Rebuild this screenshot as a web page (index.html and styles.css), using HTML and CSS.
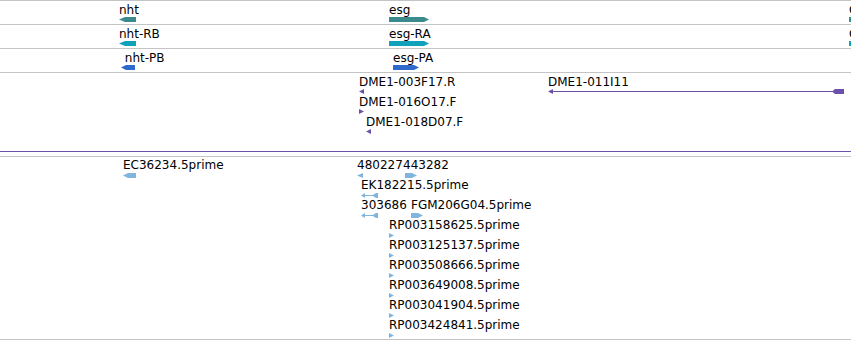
FILE: index.html
```html
<!DOCTYPE html>
<html lang="en">
<head>
  <meta charset="UTF-8" />
  <title>Feature tracks</title>
  <link rel="stylesheet" href="styles.css">
</head>
<body>
  <div class="browser">
    <!-- gene track -->
    <div class="track gene">
      <div class="feat" style="left:119px;top:2px"><span class="label">nht</span><svg width="17" height="5"><polygon points="0,2.5 6,0 17,0 17,5 6,5"/></svg></div>
      <div class="feat" style="left:389px;top:2px"><span class="label">esg</span><svg width="40" height="5"><polygon points="0,0 35,0 40,2.5 35,5 0,5"/></svg></div>
      <div class="feat" style="left:849px;top:2px"><span class="label">CG</span><svg width="10" height="5"><rect width="10" height="5"/></svg></div>
    </div>

    <!-- transcript track -->
    <div class="track mrna">
      <div class="feat" style="left:119px;top:2px"><span class="label">nht-RB</span><svg width="17" height="5"><polygon points="0,2.5 6,0 17,0 17,5 6,5"/></svg></div>
      <div class="feat" style="left:389px;top:2px"><span class="label">esg-RA</span><svg width="40" height="5"><polygon points="0,0 35,0 40,2.5 35,5 0,5"/></svg></div>
      <div class="feat" style="left:849px;top:2px"><span class="label">CG</span><svg width="10" height="5"><rect width="10" height="5"/></svg></div>
    </div>

    <!-- protein track -->
    <div class="track cds">
      <div class="feat" style="left:121px;top:2px"><span class="label">&nbsp;nht-PB</span><svg width="14" height="5"><polygon points="0,2.5 5,0 14,0 14,5 5,5"/></svg></div>
      <div class="feat" style="left:393px;top:2px"><span class="label">esg-PA</span><svg width="26" height="5"><polygon points="0,0 21,0 26,2.5 21,5 0,5"/></svg></div>
    </div>

    <!-- clone ends -->
    <div class="track clones">
      <div class="feat" style="left:359px;top:2px"><span class="label">DME1-003F17.R</span><svg width="5" height="5"><polygon points="0,2.5 5,0 5,5"/></svg></div>
      <div class="feat" style="left:359px;top:22px"><span class="label">DME1-016O17.F</span><svg width="5" height="5"><polygon points="0,0 5,2.5 0,5"/></svg></div>
      <div class="feat" style="left:366px;top:42px"><span class="label">DME1-018D07.F</span><svg width="5" height="5"><polygon points="0,2.5 5,0 5,5"/></svg></div>
      <div class="feat" style="left:548px;top:2px"><span class="label">DME1-011I11</span><svg width="296" height="5"><polygon points="0,2.5 5,0 5,5"/><rect x="4" y="2" width="282" height="1"/><polygon points="284,2.5 287,0 296,0 296,5 287,5"/></svg></div>
    </div>

    <!-- ESTs -->
    <div class="track ests">
      <div class="feat" style="left:123px;top:1px"><span class="label">EC36234.5prime</span><svg width="13" height="5"><polygon points="0,2.5 5,0 13,0 13,5 5,5"/></svg></div>
      <div class="feat" style="left:357px;top:1px"><span class="label">480227</span><svg width="7" height="5"><polygon points="0,2.5 6,0 6,5"/></svg></div>
      <div class="feat" style="left:403px;top:1px"><span class="label">443282</span><svg class="shift" width="12" height="5"><polygon points="0,0 7,0 12,2.5 7,5 0,5"/></svg></div>
      <div class="feat" style="left:361px;top:21px"><span class="label">EK182215.5prime</span><svg width="17" height="5"><polygon points="0,2.5 4,0 4,5"/><rect x="3" y="2" width="9" height="1"/><polygon points="11,2.5 15,0 17,0 17,5 15,5"/></svg></div>
      <div class="feat" style="left:361px;top:41px"><span class="label">303686</span><svg width="17" height="5"><polygon points="0,2.5 4,0 4,5"/><rect x="3" y="2" width="9" height="1"/><polygon points="11,2.5 15,0 17,0 17,5 15,5"/></svg></div>
      <div class="feat" style="left:411px;top:41px"><span class="label">FGM206G04.5prime</span><svg width="12" height="5"><polygon points="0,0 7,0 12,2.5 7,5 0,5"/></svg></div>
      <div class="feat" style="left:389px;top:61px"><span class="label">RP003158625.5prime</span><svg width="5" height="5"><polygon points="0,0 5,2.5 0,5"/></svg></div>
      <div class="feat" style="left:389px;top:81px"><span class="label">RP003125137.5prime</span><svg width="5" height="5"><polygon points="0,0 5,2.5 0,5"/></svg></div>
      <div class="feat" style="left:389px;top:101px"><span class="label">RP003508666.5prime</span><svg width="5" height="5"><polygon points="0,0 5,2.5 0,5"/></svg></div>
      <div class="feat" style="left:389px;top:121px"><span class="label">RP003649008.5prime</span><svg width="5" height="5"><polygon points="0,0 5,2.5 0,5"/></svg></div>
      <div class="feat" style="left:389px;top:141px"><span class="label">RP003041904.5prime</span><svg width="5" height="5"><polygon points="0,0 5,2.5 0,5"/></svg></div>
      <div class="feat" style="left:389px;top:161px"><span class="label">RP003424841.5prime</span><svg width="5" height="5"><polygon points="0,0 5,2.5 0,5"/></svg></div>
    </div>
  </div>
</body>
</html>
```

FILE: styles.css
```css
body {
  margin: 0;
  background-color: #fff;
  font-family: "DejaVu Sans", sans-serif;
  font-size: 12px;
  color: #000;
  overflow: hidden;
}
.browser {
  width: 851px;
  height: 340px;
  border-top: 1px solid #c4c4c4;
  box-sizing: border-box;
  overflow: hidden;
}
.track {
  position: relative;
  height: 23px;
  border-bottom: 1px solid #c4c4c4;
}
.track.clones {
  height: 78px;
  border-bottom-color: #6b52a8;
}
.track.ests {
  height: 182px;
  margin-top: 4px;
  border-top: 1px solid #c4c4c4;
}
.feat {
  position: absolute;
  white-space: nowrap;
}
.feat .label {
  display: block;
  line-height: 14px;
}
.feat svg {
  display: block;
}
.gene svg {
  fill: #3b8b8e;
}
.mrna svg {
  fill: #10a1bb;
}
.cds svg {
  fill: #2e69cd;
}
.clones svg {
  fill: #6b52a8;
  margin-top: 0;
}
.ests svg {
  fill: #80b6dd;
  margin-top: 1px;
}
.ests svg.shift {
  margin-left: 2px;
}
```
